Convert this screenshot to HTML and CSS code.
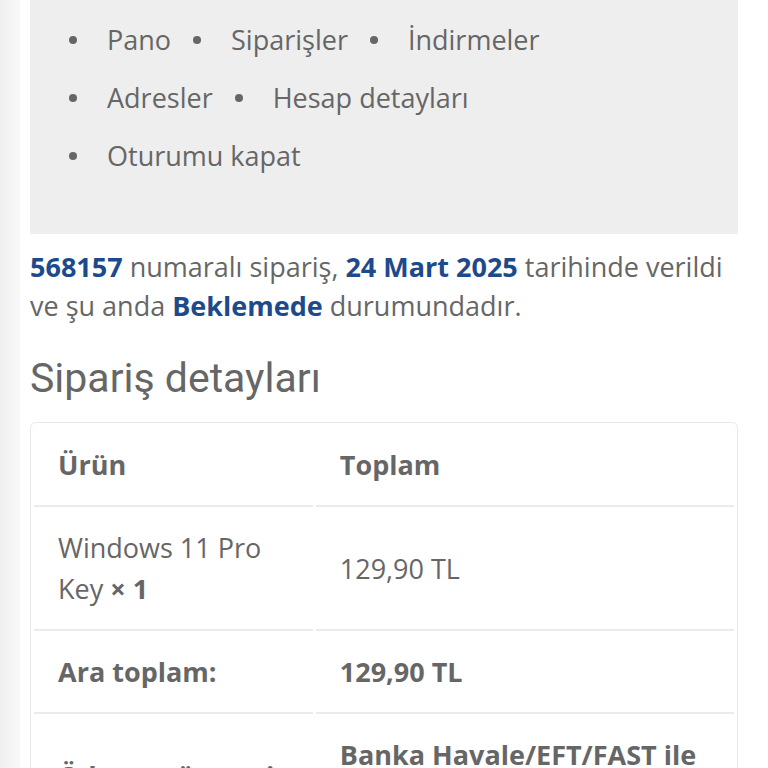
FILE: index.html
```html
<!DOCTYPE html>
<html lang="tr">
<head>
  <meta charset="UTF-8">
  <title>Sipariş detayları</title>
  <meta name="viewport" content="width=device-width, initial-scale=1" />
  <link rel="stylesheet" href="styles.css">
</head>
<body>

  <div class="page">

    <nav class="account-nav">
      <ul>
        <li><a href="#">Pano</a></li>
        <li><a href="#">Siparişler</a></li>
        <li><a href="#">İndirmeler</a></li>
        <li><a href="#">Adresler</a></li>
        <li><a href="#">Hesap detayları</a></li>
        <li><a href="#">Oturumu kapat</a></li>
      </ul>
    </nav>

    <p class="order-info">
      <mark>568157</mark> numaralı sipariş, <mark>24 Mart 2025</mark> tarihinde verildi
      ve şu anda <mark>Beklemede</mark> durumundadır.
    </p>

    <h2 class="order-title">Sipariş detayları</h2>

    <table class="order-table">
      <thead>
        <tr>
          <th class="col-product">Ürün</th>
          <th>Toplam</th>
        </tr>
      </thead>
      <tbody>
        <tr>
          <td>Windows 11 Pro Key <strong>× 1</strong></td>
          <td>129,90 TL</td>
        </tr>
      </tbody>
      <tfoot>
        <tr>
          <th>Ara toplam:</th>
          <td><strong>129,90 TL</strong></td>
        </tr>
        <tr>
          <th>Ödeme yöntemi:</th>
          <td><strong>Banka Havale/EFT/FAST ile Ödeme</strong></td>
        </tr>
        <tr>
          <th>Toplam:</th>
          <td><strong>129,90 TL</strong></td>
        </tr>
      </tfoot>
    </table>

  </div>

</body>
</html>
```

FILE: styles.css
```css
body {
  margin: 0;
  padding: 0;
  background: linear-gradient(to right, #efefef 0, #f9f9f9 20px, #fff 21px);
  font-family: "Open Sans", sans-serif;
  color: #666;
}
*, *:before, *:after {
  box-sizing: border-box;
}

.page {
  padding: 0 30px 0 30px;
}

.account-nav {
  background-color: #eee;
  padding: 11px 30px 49px 39px;
}
.account-nav ul {
  list-style: none;
  margin: 0;
  padding: 0;
  display: flex;
  flex-wrap: wrap;
  width: 560px;
}
.account-nav li {
  font-size: 27px;
  line-height: 58px;
  margin-right: 22px;
  display: flex;
  align-items: center;
}
.account-nav li:before {
  content: '';
  width: 8px;
  height: 8px;
  border-radius: 50%;
  background-color: #666;
  margin-right: 30px;
}
.account-nav a {
  color: #666;
  text-decoration: none;
}

.order-info {
  margin: 13px 0 0;
  font-size: 27px;
  line-height: 39px;
}
.order-info mark {
  background: none;
  color: #1d4a8c;
  font-weight: 700;
}

.order-title {
  font-family: Roboto, sans-serif;
  font-weight: 400;
  font-size: 41px;
  line-height: 48px;
  margin: 29px 0 20px;
  color: #666;
}

.order-table {
  width: 100%;
  border: 1px solid #e8e8e8;
  border-radius: 6px;
  border-collapse: separate;
  border-spacing: 3px 0;
  font-size: 27px;
  line-height: 41px;
  color: #666;
}
.order-table th,
.order-table td {
  text-align: left;
  vertical-align: middle;
  padding: 20px 24px;
  border-top: 2px solid #ebebeb;
}
.order-table thead th {
  border-top: none;
  padding-top: 21px;
}
.order-table .col-product {
  width: 40%;
}
.order-table th {
  font-weight: 700;
}
.order-table td strong {
  font-weight: 700;
}
```
